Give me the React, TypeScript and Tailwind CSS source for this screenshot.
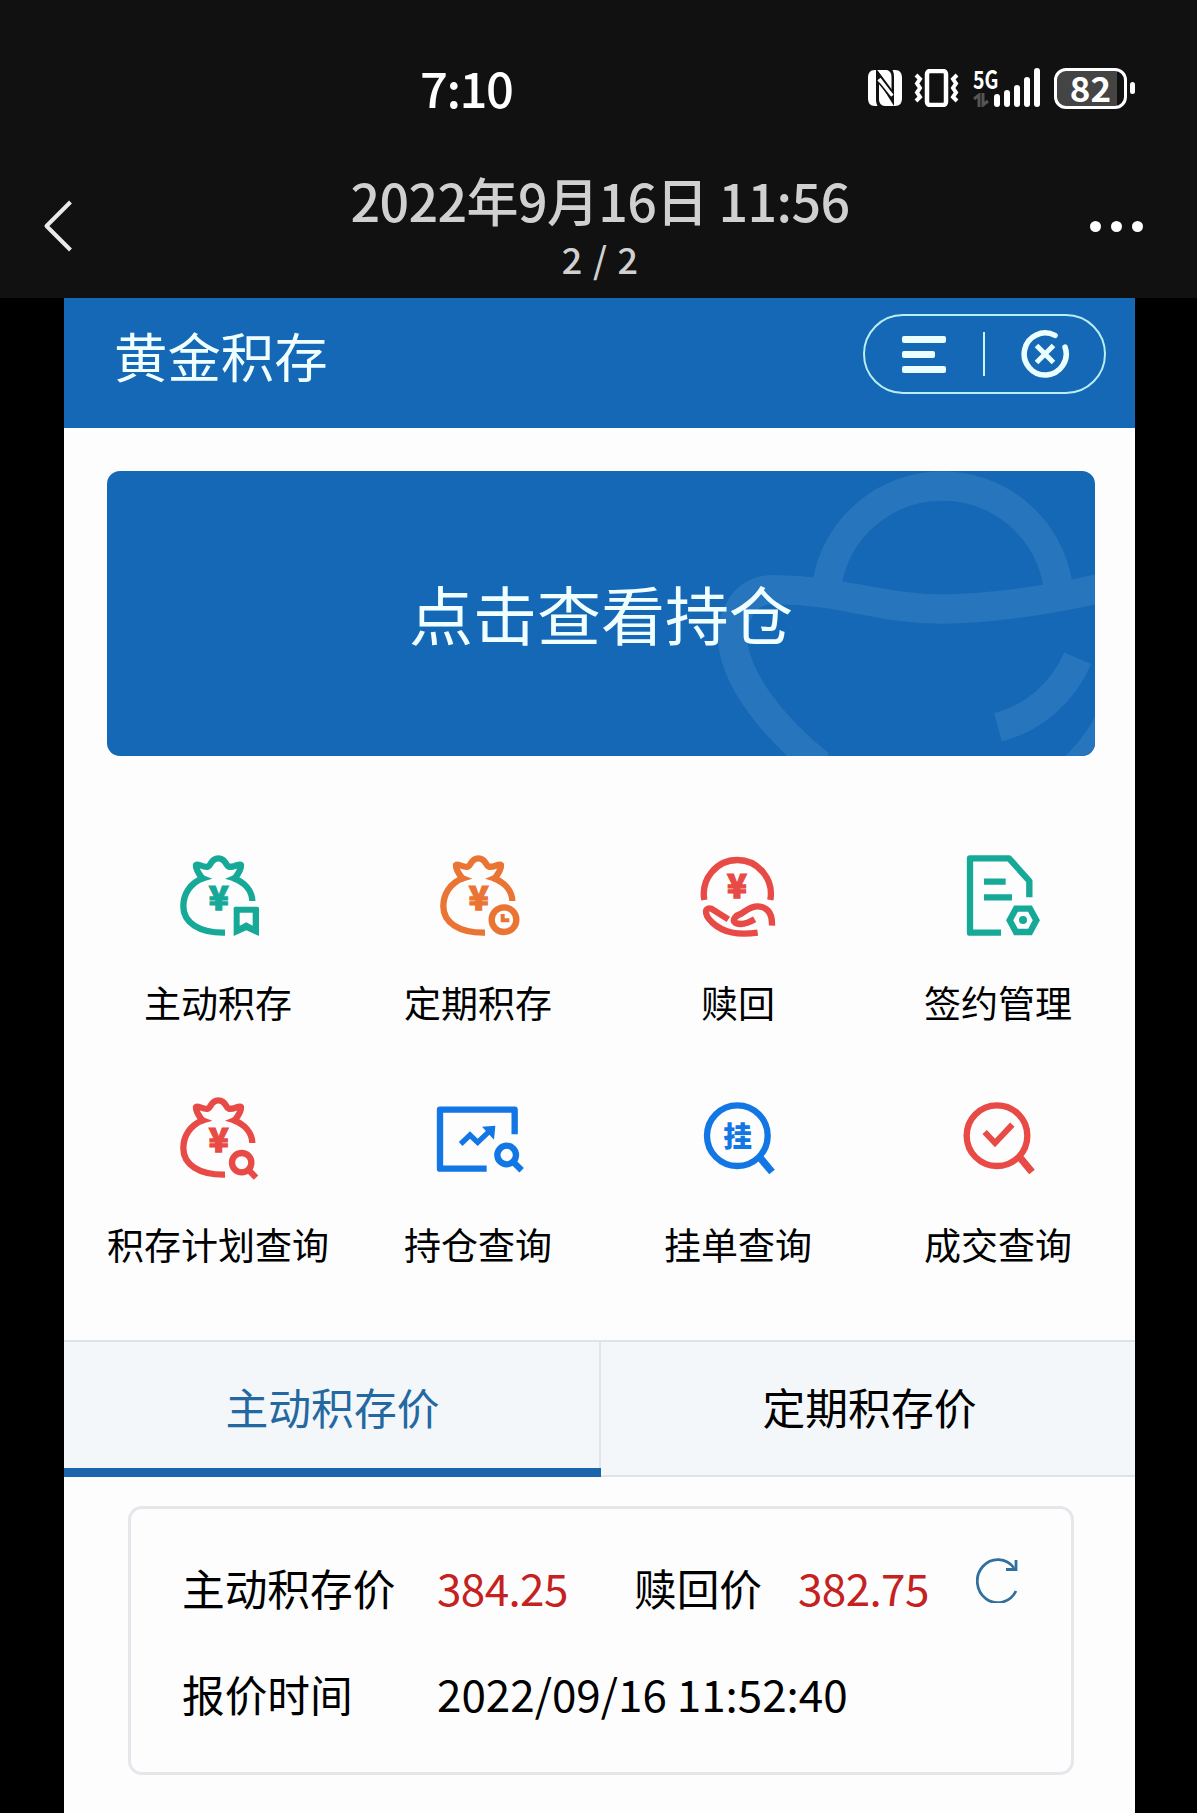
import type { ReactNode } from 'react';

const GREEN = '#16a997';
const ORANGE = '#ea7433';
const RED = '#e84a46';
const BLUE = '#1276e4';

interface IconProps {
  color: string;
  children?: ReactNode;
}

const MenuIcon = ({ color, children }: IconProps) => (
  <svg viewBox="0 0 300 300" className="h-[100px] w-[100px]" fill="none" stroke={color} strokeWidth="19">
    {children}
  </svg>
);

const Yen = ({ color, x, y }: { color: string; x: number; y: number }) => (
  <text x={x} y={y} fill={color} stroke={color} strokeWidth="4" textAnchor="middle" fontSize="98" fontWeight="900">
    ¥
  </text>
);

const BagIcon = ({ color, children }: IconProps) => (
  <MenuIcon color={color}>
    <path
      d="M103 100C92 86 83 71 84 60C88 54 105 68 120 65C130 61 128 40 151 40C174 40 172 61 182 65C197 68 214 54 219 60C220 71 211 86 200 100"
      strokeLinejoin="round"
    />
    <path d="M106 99C66 114 46 148 46 184C46 232 92 264 171 263" />
    <path d="M196 99C230 112 252 137 253 168" />
    <path d="M98 88L133 101L98 112zM204 88L171 101L206 112z" fill={color} stroke="none" />
    <Yen color={color} x={152} y={196} />
    {children}
  </MenuIcon>
);

const menus = [
  {
    label: '主动积存',
    icon: (
      <BagIcon color={GREEN}>
        <path
          d="M197 190Q197 185 202 185H268Q273 185 273 190V273L235 256L197 273ZM215 203V242L235 232L254 242V203Z"
          fill={GREEN}
          fillRule="evenodd"
          stroke="none"
        />
      </BagIcon>
    ),
  },
  {
    label: '定期积存',
    icon: (
      <BagIcon color={ORANGE}>
        <circle cx="228" cy="224" r="37" />
        <path d="M224 207V226H244" strokeWidth="12" />
      </BagIcon>
    ),
  },
  {
    label: '赎回',
    icon: (
      <MenuIcon color={RED}>
        <path d="M49 165A100.600 102 0 1 1 247 165" />
        <Yen color={RED} x={147} y={160} />
        <path d="M121 223L72 192C50 184 46 207 72 232C107 264 150 271 209 263" />
        <path d="M200 223C180 235 158 240 143 234C128 226 146 210 160 206C183 190 200 180 222 186C245 193 253 215 252 242" />
      </MenuIcon>
    ),
  },
  {
    label: '签约管理',
    icon: (
      <MenuIcon color={GREEN}>
        <path d="M159 263H66V40H183L244 108V157" strokeLinejoin="round" />
        <path d="M108 110H173M108 157H192" />
        <path d="M185 226L204 191H246L265 226L246 261H204Z" />
        <circle cx="225" cy="225" r="12" fill={GREEN} stroke="none" />
      </MenuIcon>
    ),
  },
  {
    label: '积存计划查询',
    icon: (
      <BagIcon color={RED}>
        <circle cx="221" cy="227" r="29" />
        <path d="M240 247L264 272" />
      </BagIcon>
    ),
  },
  {
    label: '持仓查询',
    icon: (
      <MenuIcon color={BLUE}>
        <path d="M176 245H36V68H260V142" strokeLinejoin="round" />
        <path d="M98 171L126 144L149 166L186 131" strokeWidth="16" />
        <path d="M162 119L202 116L198 158Z" fill={BLUE} stroke="none" />
        <circle cx="236" cy="204" r="28" />
        <path d="M255 224L281 250" />
      </MenuIcon>
    ),
  },
  {
    label: '挂单查询',
    icon: (
      <MenuIcon color={BLUE}>
        <circle cx="148" cy="146" r="91" />
        <path d="M211 206L252 255" strokeWidth="22" />
        <text x="149" y="179" fill={BLUE} stroke="none" textAnchor="middle" fontSize="86" fontWeight="900">
          挂
        </text>
      </MenuIcon>
    ),
  },
  {
    label: '成交查询',
    icon: (
      <MenuIcon color={RED}>
        <circle cx="147" cy="146" r="91" />
        <path d="M211 206L252 255" strokeWidth="22" />
        <path d="M110 135L141 168L193 113" strokeWidth="18" />
      </MenuIcon>
    ),
  },
];

const StatusIcons = () => (
  <div className="flex h-[42px] items-center text-white">
    <svg viewBox="0 0 34 36" className="h-9 w-[34px]">
      <path d="M7 0C2 0 0 3 0 8V28C0 33 2 36 7 36H9.500C8.500 34 8 32 8 29V0Z" fill="currentColor" />
      <path d="M27 36C32 36 34 33 34 28V8C34 3 32 0 27 0H24.500C25.500 2 26 4 26 7V36Z" fill="currentColor" />
      <path d="M9 0H19C22 1 23.500 3 23.500 7V20Z" fill="currentColor" />
      <path d="M11 12V29C11 33 13 36 17 36H26Z" fill="currentColor" />
      <path d="M11 9L24 26" stroke="currentColor" strokeWidth="4" />
      <path d="M9 1L24 21M11 13L24 29" stroke="#111" strokeWidth="1.500" />
    </svg>
    <svg viewBox="0 0 46 38" className="ml-[12px] h-[38px] w-[46px]" fill="none" stroke="currentColor">
      <rect x="13" y="2" width="19" height="34" rx="3" strokeWidth="4.500" />
      <path d="M2 6L6 10L3 14.500L6 19L3 23.500L6 28L2 32M43 6L39 10L42 14.500L39 19L42 23.500L39 28L43 32" strokeWidth="4" />
    </svg>
    <div className="ml-[13px] flex h-10 w-[68px] items-start">
      <div className="flex w-[21px] shrink-0 flex-col">
        <span className="origin-left scale-x-[0.78] text-[25px] leading-[21px] font-bold">5G</span>
        <svg viewBox="0 0 16 14" className="mt-[4px] h-[14px] w-4" fill="none" stroke="#555" strokeWidth="3">
          <path d="M1 6L6 2V14M10 0V12L15 8" />
        </svg>
      </div>
      <div className="flex h-[39px] items-end gap-[4px]">
        <i className="h-[13px] w-[6px] rounded-full bg-white" />
        <i className="h-[17px] w-[6px] rounded-full bg-white" />
        <i className="h-[22px] w-[6px] rounded-full bg-white" />
        <i className="h-[30px] w-[6px] rounded-full bg-white" />
        <i className="h-[39px] w-[6px] rounded-full bg-white" />
      </div>
    </div>
    <div className="ml-[13px] flex h-[41px] w-[73px] items-center justify-center rounded-xl border-[3px] border-white bg-linear-to-r from-[#444] from-90% to-[#111] to-90% pb-[3px] text-[35px] leading-none font-bold">
      82
    </div>
    <div className="ml-[3px] h-3 w-[5px] rounded-full bg-white" />
  </div>
);

export default function App() {
  return (
    <div className="flex h-[1813px] w-[1197px] flex-col overflow-hidden bg-black font-['Noto_Sans_CJK_SC',sans-serif]">
      <header className="h-[298px] shrink-0 bg-[#111]">
        <div className="flex h-[148px] items-start justify-between pt-[67px] pr-[62px] pl-[420px]">
          <span className="text-[49px] leading-[40px] font-medium tracking-[-1.5px] text-white">7:10</span>
          <StatusIcons />
        </div>
        <div className="flex h-[150px] items-start pl-[43px]">
          <svg viewBox="0 0 30 52" className="mt-[52px] h-[52px] w-[30px]" fill="none" stroke="#eaeaea" strokeWidth="4">
            <path d="M27.500 2L3.500 26L27.500 50" strokeLinejoin="round" />
          </svg>
          <div className="ml-[227px] flex w-[600px] flex-col items-center font-medium text-[#d0d0d0]">
            <h1 className="mt-[17px] text-[52px] leading-[70px] tracking-[-0.65px] whitespace-nowrap">2022年9月16日 11:56</h1>
            <p className="text-[36px] leading-[46px] [word-spacing:2.5px]">2 / 2</p>
          </div>
          <div className="mt-[73px] ml-[190px] flex gap-[10px]">
            <i className="h-[11px] w-[11px] rounded-full bg-white" />
            <i className="h-[11px] w-[11px] rounded-full bg-white" />
            <i className="h-[11px] w-[11px] rounded-full bg-white" />
          </div>
        </div>
      </header>

      <main className="mr-[62px] ml-[64px] flex-1 bg-[#fdfdfe] text-black">
        <div className="flex h-[130px] items-start justify-between bg-[#1568b5] pt-[16px] pr-[29px] pl-[50px]">
          <h2 className="text-[53.4px] leading-[81px] text-[#f0ffff]">黄金积存</h2>
          <div className="flex h-20 w-[243px] items-center rounded-full border-2 border-[#b9eef5] pl-[37px]">
            <div className="flex w-[44px] flex-col gap-[8px]">
              <i className="h-[7px] rounded-xs bg-[#ecffff]" />
              <i className="h-[7px] w-[33px] rounded-xs bg-[#ecffff]" />
              <i className="h-[7px] rounded-xs bg-[#ecffff]" />
            </div>
            <div className="ml-[37px] h-[44px] w-[2px] bg-[#c9f3f8]" />
            <svg viewBox="0 0 50 50" className="ml-[35px] h-[50px] w-[50px]" fill="none" stroke="#ecffff">
              <path d="M35 6.400A21 21 0 1 0 45 18" strokeWidth="5.500" strokeLinecap="round" />
              <path d="M16.500 16.500L33.500 33.500M33.500 16.500L16.500 33.500" strokeWidth="5" />
            </svg>
          </div>
        </div>

        <div className="relative mt-[43px] mr-[40px] ml-[43px] flex h-[285px] items-center justify-center overflow-hidden rounded-[13px] bg-[#1568b5]">
          <svg
            viewBox="0 33 1245 855"
            className="absolute top-0 right-0 h-[285px] w-[415px]"
            fill="none"
            stroke="#2775bd"
            strokeWidth="88"
          >
            <path d="M441 370A351 351 0 0 1 1133 370" />
            <path d="M1290 378C1080 428 900 447 787 447C590 447 500 390 280 389C190 389 150 470 160 560C176 660 265 790 420 915" />
            <path d="M1310 740C1280 800 1250 860 1185 920" />
            <path d="M954 802A360 360 0 0 0 1193 595" />
          </svg>
          <span className="relative pb-[3px] text-[64px] leading-[62px] text-[#f0ffff]">点击查看持仓</span>
        </div>

        <nav className="mt-[89px] ml-[24px] grid w-[1040px] grid-cols-4">
          {menus.map((m) => (
            <div key={m.label} className="flex h-[242px] flex-col items-center">
              {m.icon}
              <span className="mt-[29px] text-[37px] leading-[56px] whitespace-nowrap">{m.label}</span>
            </div>
          ))}
        </nav>

        <div className="mt-[11px] flex h-[137px] border-t-2 border-[#e0e3e6] bg-[#f3f7fa] text-[42.8px]">
          <div className="flex w-[537px] items-center justify-center border-b-[9px] border-[#1966ac] pt-[3px] text-[#2468a2] shadow-[inset_-2px_0_0_#e2e5e8]">
            主动积存价
          </div>
          <div className="flex flex-1 items-center justify-center border-b-2 border-[#e0e3e6] pb-[4px] pl-[3px]">定期积存价</div>
        </div>

        <section className="mt-[29px] ml-[64px] h-[269px] w-[946px] rounded-[14px] border-[3px] border-[#e6e7ea] pt-[46px] pl-[51px] text-[42.7px] leading-[64px]">
          <div className="flex items-center">
            <span className="w-[255px]">主动积存价</span>
            <span className="w-[197px] text-[44px] tracking-[-0.6px] text-[#c4211f]">384.25</span>
            <span className="w-[164px]">赎回价</span>
            <span className="w-[178px] text-[44px] tracking-[-0.6px] text-[#c4211f]">382.75</span>
            <svg viewBox="0 0 44 46" className="mb-[15px] h-[46px] w-[44px]" fill="none" stroke="#30709f" strokeWidth="2.800">
              <path d="M40 34A20.500 21.500 0 1 1 38 11" />
              <path d="M40 3V12.500H30" />
            </svg>
          </div>
          <div className="mt-[42px] flex">
            <span className="w-[255px]">报价时间</span>
            <span className="text-[44px]">2022/09/16 11:52:40</span>
          </div>
        </section>
      </main>
    </div>
  );
}
